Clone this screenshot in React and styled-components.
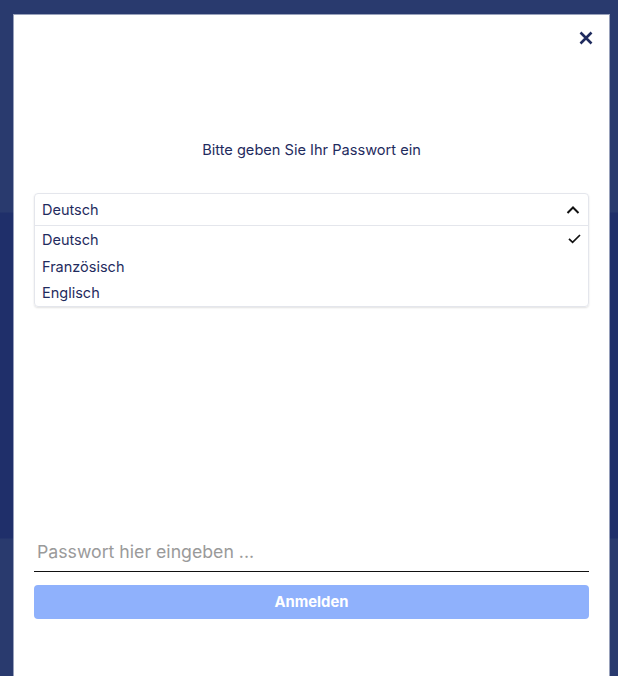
import React from "react";
import styled, { createGlobalStyle } from "styled-components";

const Global = createGlobalStyle`
  html, body { margin: 0; padding: 0; }
  body { font-family: Inter, "Noto Sans", sans-serif; }
  * { box-sizing: border-box; }
`;

const Page = styled.div`
  width: 618px;
  height: 676px;
  overflow: hidden;
  padding: 15px 9px 0 14px;
  background: linear-gradient(
    180deg,
    #293a6e 0px,
    #293a6e 212px,
    #1f2f6a 213px,
    #1f2f6a 538px,
    #293a6e 539px
  );
`;

const Modal = styled.div`
  width: 595px;
  min-height: 700px;
  background: #ffffff;
  box-shadow: 0 0 0 1px rgba(190, 196, 214, 0.75);
  display: flex;
  flex-direction: column;
  padding: 16px 20px 0 20px;
  color: #1f2b5e;
`;

const TopBar = styled.div`
  display: flex;
  justify-content: flex-end;
  margin-right: -4px;
`;

const CloseButton = styled.button`
  width: 14px;
  height: 14px;
  padding: 0;
  border: 0;
  background: transparent;
  display: flex;
  align-items: center;
  justify-content: center;
  cursor: pointer;
`;

const Title = styled.p`
  margin: 95px 0 0 0;
  text-align: center;
  font-size: 14.6px;
  line-height: 20px;
  color: #1f2b5e;
`;

const Select = styled.div`
  margin-top: 33px;
  border: 1px solid #e4e6ec;
  border-radius: 4px;
  box-shadow: 0 1px 2px rgba(0, 0, 0, 0.12);
  overflow: hidden;
`;

const SelectHeader = styled.div`
  height: 32px;
  display: flex;
  align-items: center;
  justify-content: space-between;
  padding: 0 8px 0 7px;
  font-size: 14.5px;
  border-bottom: 1px solid #e4e6ec;
`;

const Options = styled.ul`
  list-style: none;
  margin: 0;
  padding: 0;
`;

const Option = styled.li`
  height: 26.7px;
  display: flex;
  align-items: center;
  justify-content: space-between;
  padding: 0 7px;
  font-size: 14.5px;
  color: #1f2b5e;
`;

const Spacer = styled.div`
  flex: 0 0 228px;
`;

const PasswordInput = styled.input`
  width: 100%;
  height: 37px;
  border: 0;
  border-bottom: 1.5px solid #111;
  outline: none;
  padding: 0 3px 3px 3px;
  font-family: Inter, "Noto Sans", sans-serif;
  font-size: 17.7px;
  color: #1f2b5e;
  background: transparent;
  &::placeholder { color: #9a9a9a; }
`;

const SubmitButton = styled.button`
  margin-top: 13px;
  width: 100%;
  height: 34px;
  border: 0;
  border-radius: 4px;
  background: #8fb1fc;
  color: #ffffff;
  font-family: Inter, "Noto Sans", sans-serif;
  font-weight: 700;
  font-size: 14.8px;
`;

const CloseIcon = () => (
  <svg width="14" height="14" viewBox="0 0 14 14">
    <path d="M1.5 1.5 L12.5 12.5 M12.5 1.5 L1.5 12.5" stroke="#1f2b5e" strokeWidth="2.6" strokeLinecap="butt" />
  </svg>
);

const ChevronUp = () => (
  <svg width="14" height="10" viewBox="0 0 14 10">
    <path d="M1.5 8 L7 2.5 L12.5 8" fill="none" stroke="#111" strokeWidth="2" />
  </svg>
);

const Check = () => (
  <svg width="13" height="10" viewBox="0 0 13 10">
    <path d="M1 4.8 L4.6 8.4 L12 1" fill="none" stroke="#111" strokeWidth="1.7" />
  </svg>
);

const languages = ["Deutsch", "Französisch", "Englisch"];

export default function App() {
  return (
    <>
      <Global />
      <Page>
        <Modal>
          <TopBar>
            <CloseButton aria-label="Schließen">
              <CloseIcon />
            </CloseButton>
          </TopBar>
          <Title>Bitte geben Sie Ihr Passwort ein</Title>
          <Select>
            <SelectHeader>
              <span>Deutsch</span>
              <ChevronUp />
            </SelectHeader>
            <Options>
              {languages.map((l, i) => (
                <Option key={l}>
                  <span>{l}</span>
                  {i === 0 && <Check />}
                </Option>
              ))}
            </Options>
          </Select>
          <Spacer />
          <PasswordInput type="password" placeholder="Passwort hier eingeben ..." />
          <SubmitButton>Anmelden</SubmitButton>
        </Modal>
      </Page>
    </>
  );
}
